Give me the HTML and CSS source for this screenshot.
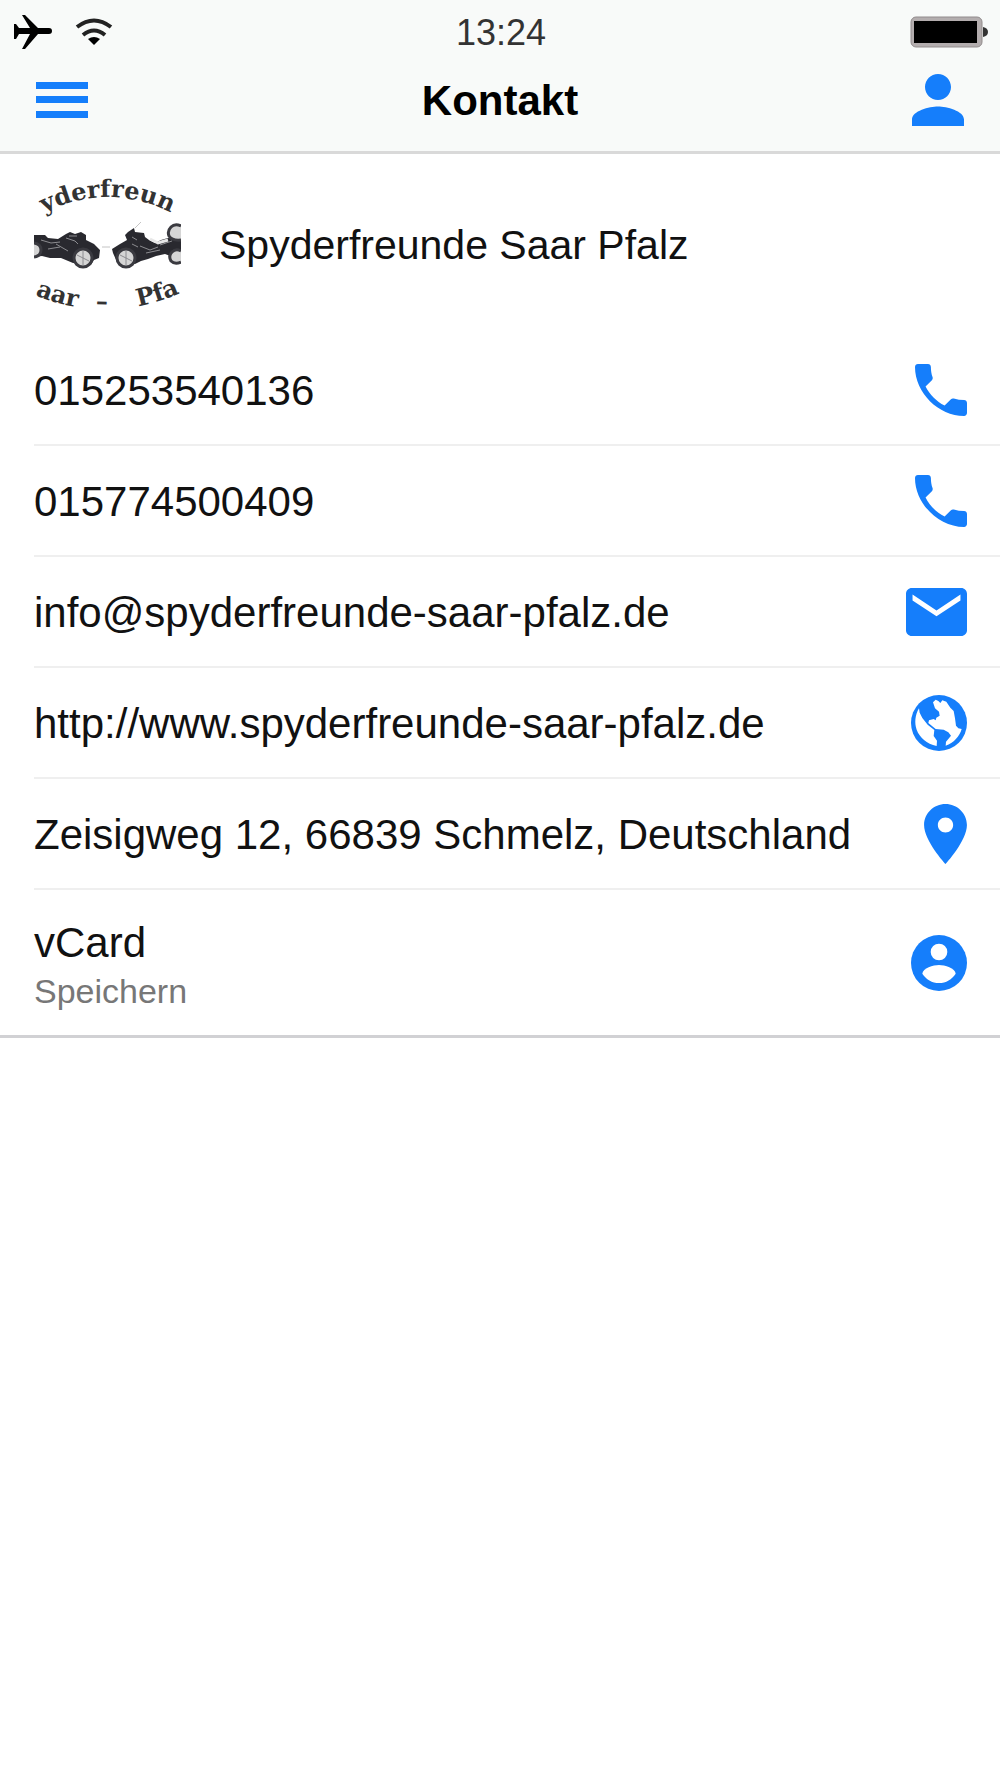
FILE: index.html
```html
<!DOCTYPE html>
<html lang="de">
<head>
<meta charset="utf-8">
<meta name="viewport" content="width=device-width, initial-scale=1">
<title>Kontakt</title>
<link rel="stylesheet" href="styles.css">
</head>
<body>
<header class="header">
  <div class="status">
    <div class="status-left">
      <svg class="plane" viewBox="0 0 38 36" aria-hidden="true"><path d="M0 10h2l3 4h11L8 1h3l13 13h11q3 0 3 3t-3 3H24L11 35H8l8-15H5l-3 5H0z"/></svg>
      <svg class="wifi" viewBox="0 0 38 28" aria-hidden="true"><path d="M2 9q17-13 34 0M8 17q11-9 22 0" fill="none" stroke="#222" stroke-width="4"/><path d="M13 21q6-4 12 0l-6 6z"/></svg>
    </div>
    <time class="clock">13:24</time>
    <svg class="battery" viewBox="0 0 78 32" aria-hidden="true"><rect x="1" y="1" width="71" height="30" rx="5" fill="#b3adae" stroke="#928c8d" stroke-width="1"/><rect x="4" y="5" width="63" height="22"/><path d="M73 11q5 1 5 5t-5 5z" fill="#333"/></svg>
  </div>
  <div class="navbar">
    <button class="nav-button" type="button" aria-label="Menü"><svg class="icon-menu" viewBox="0 0 52 36"><path d="M0 0h52v7H0zM0 14h52v7H0zM0 29h52v7H0z"/></svg></button>
    <h1 class="title">Kontakt</h1>
    <button class="nav-button" type="button" aria-label="Profil"><svg class="icon-52" viewBox="64 64 384 384"><path d="M256 256c52.805 0 96-43.201 96-96s-43.195-96-96-96-96 43.201-96 96 43.195 96 96 96zm0 48c-63.598 0-192 32.402-192 96v48h384v-48c0-63.598-128.402-96-192-96z"/></svg></button>
  </div>
</header>
<main class="contact">
  <div class="profile">
    <svg class="logo" viewBox="0 0 147 147" role="img" aria-label="Spyderfreunde Saar Pfalz Logo">
      <defs>
        <path id="arc-top" d="M0 47Q74 5 147 47"/>
        <path id="arc-bottom" d="M1 124Q74 154 146 122"/>
      </defs>
      <g class="logo-text">
        <text text-anchor="middle"><textPath href="#arc-top" startOffset="50%">yderfreun</textPath></text>
        <text><textPath href="#arc-bottom">aar</textPath></text>
        <text text-anchor="middle"><textPath href="#arc-bottom" startOffset="46%">–</textPath></text>
        <text text-anchor="end"><textPath href="#arc-bottom" startOffset="100%">Pfa</textPath></text>
      </g>
      <path d="M0 64l11 0 3 3 10 1 8-5 4-2 5 2 6-2 5 3 0 5 8 4 6 6-1 8-5 2-3 5-18-2-12-5-11 0-8-2-8 1zM78 78l8-5 7-4-2-5 3-3 6-4 1 4 9 1 1 4 4 3 6 3 6-3 7-2 13 2v14l-8 3-8-3-9 2-8 3-7 2-6 3-18-2-4-9z" fill="#29292f"/>
      <g fill="#d5d5d5" stroke="#3a3a40" stroke-width="3"><circle cx="49" cy="87" r="9"/><circle cx="92" cy="87" r="9"/><path d="M0 72q7 1 7 7t-7 7M147 80q-5-3-9 1t-1 9q4 4 10 1M147 55q-6-3-10 1t-2 9q3 5 12 4"/></g>
      <g fill="none" stroke="#8c8c90" stroke-width="1"><path d="M7 69l10 3 9-1M14 78l12-2M32 67l9 3 3 3M35 65l8 0M22 73l12 7M106 75l10 4 8-3M112 82l14-3M98 66l5 3M98 73l6 3M49 80v14M43 84l12 6M92 80v14M86 84l12 6M126 74l12-4"/><path d="M68 76h8M101 57l6-6" stroke="#c4c4c4"/><path d="M116 68l8 4 10-3" stroke="#e7e7e7" stroke-width="3"/></g>
    </svg>
    <h2 class="name">Spyderfreunde Saar Pfalz</h2>
  </div>
  <ul class="list">
    <li><a class="row" href="tel:015253540136"><span class="label">015253540136</span><svg class="icon-52" viewBox="64 64 384 384" aria-hidden="true"><path d="M426.666 330.667a250.385 250.385 0 0 1-75.729-11.729c-7.469-2.136-16-1.073-21.332 5.333l-46.939 46.928c-60.802-30.928-109.864-80-140.802-140.803l46.939-46.927c5.332-5.333 7.462-13.864 5.332-21.333-8.537-24.531-12.802-50.136-12.802-76.803C181.333 73.604 171.734 64 160 64H85.333C73.599 64 64 73.604 64 85.333 64 274.136 237.864 448 426.666 448c11.73 0 21.334-9.604 21.334-21.333V352c0-11.729-9.604-21.333-21.334-21.333z"/></svg></a></li>
    <li><a class="row" href="tel:015774500409"><span class="label">015774500409</span><svg class="icon-52" viewBox="64 64 384 384" aria-hidden="true"><path d="M426.666 330.667a250.385 250.385 0 0 1-75.729-11.729c-7.469-2.136-16-1.073-21.332 5.333l-46.939 46.928c-60.802-30.928-109.864-80-140.802-140.803l46.939-46.927c5.332-5.333 7.462-13.864 5.332-21.333-8.537-24.531-12.802-50.136-12.802-76.803C181.333 73.604 171.734 64 160 64H85.333C73.599 64 64 73.604 64 85.333 64 274.136 237.864 448 426.666 448c11.73 0 21.334-9.604 21.334-21.333V352c0-11.729-9.604-21.333-21.334-21.333z"/></svg></a></li>
    <li><a class="row" href="mailto:info@spyderfreunde-saar-pfalz.de"><span class="label">info@spyderfreunde-saar-pfalz.de</span><svg class="icon-mail" viewBox="32 80 448 352" aria-hidden="true"><path d="M437.332 80H74.668C51.199 80 32 99.198 32 122.667v266.666C32 412.802 51.199 432 74.668 432h362.664C460.801 432 480 412.802 480 389.333V122.667C480 99.198 460.801 80 437.332 80zM432 170.667L256 288 80 170.667V128l176 117.333L432 128v42.667z"/></svg></a></li>
    <li><a class="row" href="http://www.spyderfreunde-saar-pfalz.de"><span class="label">http://www.spyderfreunde-saar-pfalz.de</span><svg class="icon-56" viewBox="0 0 168 168" aria-hidden="true"><circle cx="84" cy="84" r="84"/><path d="M24 40C12 60 10 84 17 104c9 24 30 42 60 49l1-16-10-14 2-18-20-16-16-20-8-16zM66 22l8-8 8 4 6 6 6-8 12 4 12 18 10 10 4 22 3 22 7 8 10 2c-6 22-24 42-48 50l1-12 15-18-8-10-14-8-24-2-22-18 2-8 14-4 6 4 2-8 10-6-2-12-12-10z" fill="#fff"/></svg></a></li>
    <li><a class="row" href="geo:0,0?q=Zeisigweg%2012,%2066839%20Schmelz"><span class="label">Zeisigweg 12, 66839 Schmelz, Deutschland</span><svg class="icon-pin" viewBox="96 32 320 448" aria-hidden="true"><path d="M256 32c-88.004 0-160 70.557-160 156.801C96 306.4 256 480 256 480s160-173.6 160-291.199C416 102.557 344.004 32 256 32zm0 212.801c-31.996 0-57.144-24.645-57.144-56 0-31.357 25.147-56 57.144-56s57.144 24.643 57.144 56c0 31.355-25.148 56-57.144 56z"/></svg></a></li>
    <li><a class="row row-tall" href="#vcard"><span class="label">vCard<small class="sub">Speichern</small></span><svg class="icon-56" viewBox="0 0 168 168" aria-hidden="true"><circle cx="84" cy="84" r="84"/><circle cx="84" cy="51" r="25" fill="#fff"/><path d="M34 116C35 99 67 90 84 90s49 9 50 26c-11 17-29 28-50 28s-39-11-50-28z" fill="#fff"/></svg></a></li>
  </ul>
</main>
</body>
</html>
```
FILE: styles.css
```css
* { box-sizing: border-box; }

body {
  margin: 0;
  background: #fff;
  color: #111;
  font-family: "Liberation Sans", Arial, sans-serif;
  font-size: 42px;
  line-height: 48px;
}

svg { display: block; flex: none; }

.header {
  background: #f8faf9;
  border-bottom: 3px solid #d9d9d9;
}

.status {
  display: grid;
  grid-template-columns: 1fr auto 1fr;
  align-items: center;
  height: 64px;
  padding: 0 12px 0 14px;
}

.status-left { display: flex; align-items: center; gap: 23px; }
.plane { width: 38px; height: 36px; }
.wifi { width: 38px; height: 28px; }
.clock { padding-top: 2px; font-size: 36px; color: #333; }
.battery { width: 78px; height: 32px; justify-self: end; }

.navbar {
  display: grid;
  grid-template-columns: 1fr auto 1fr;
  align-items: center;
  height: 87px;
  padding: 0 36px 16px;
}

.nav-button {
  justify-self: start;
  padding: 0;
  border: 0;
  background: none;
  fill: #157efb;
}
.nav-button:last-child { justify-self: end; }
.icon-menu { width: 52px; height: 36px; }

.title { margin: 0; padding-top: 2px; font-size: 42px; font-weight: 700; color: #000; }

.contact { border-bottom: 3px solid #d1d1d4; }

.profile {
  display: flex;
  align-items: center;
  gap: 38px;
  padding: 17px 34px;
}

.logo { width: 147px; height: 147px; }
.logo-text {
  font-family: "DejaVu Serif", serif;
  font-size: 24px;
  font-weight: 700;
  fill: #333;
}

.name { margin: 0; font-size: 41px; font-weight: 400; }

.list { margin: 0; padding: 0 0 0 34px; list-style: none; }

.row {
  display: flex;
  align-items: center;
  justify-content: space-between;
  min-height: 111px;
  padding-right: 33px;
  border-bottom: 2px solid #efefef;
  color: inherit;
  text-decoration: none;
}
.row svg { fill: #157efb; }
.row-tall { min-height: 145px; border-bottom: 0; }

.label { padding-top: 3px; }
.row-tall .label { padding-top: 8px; }
.sub { display: block; font-size: 34px; color: #777; }

.icon-52 { width: 52px; height: 52px; }
.icon-56 { width: 56px; height: 56px; }
.icon-mail { width: 61px; height: 48px; }
.icon-pin { width: 43px; height: 60px; }
```
